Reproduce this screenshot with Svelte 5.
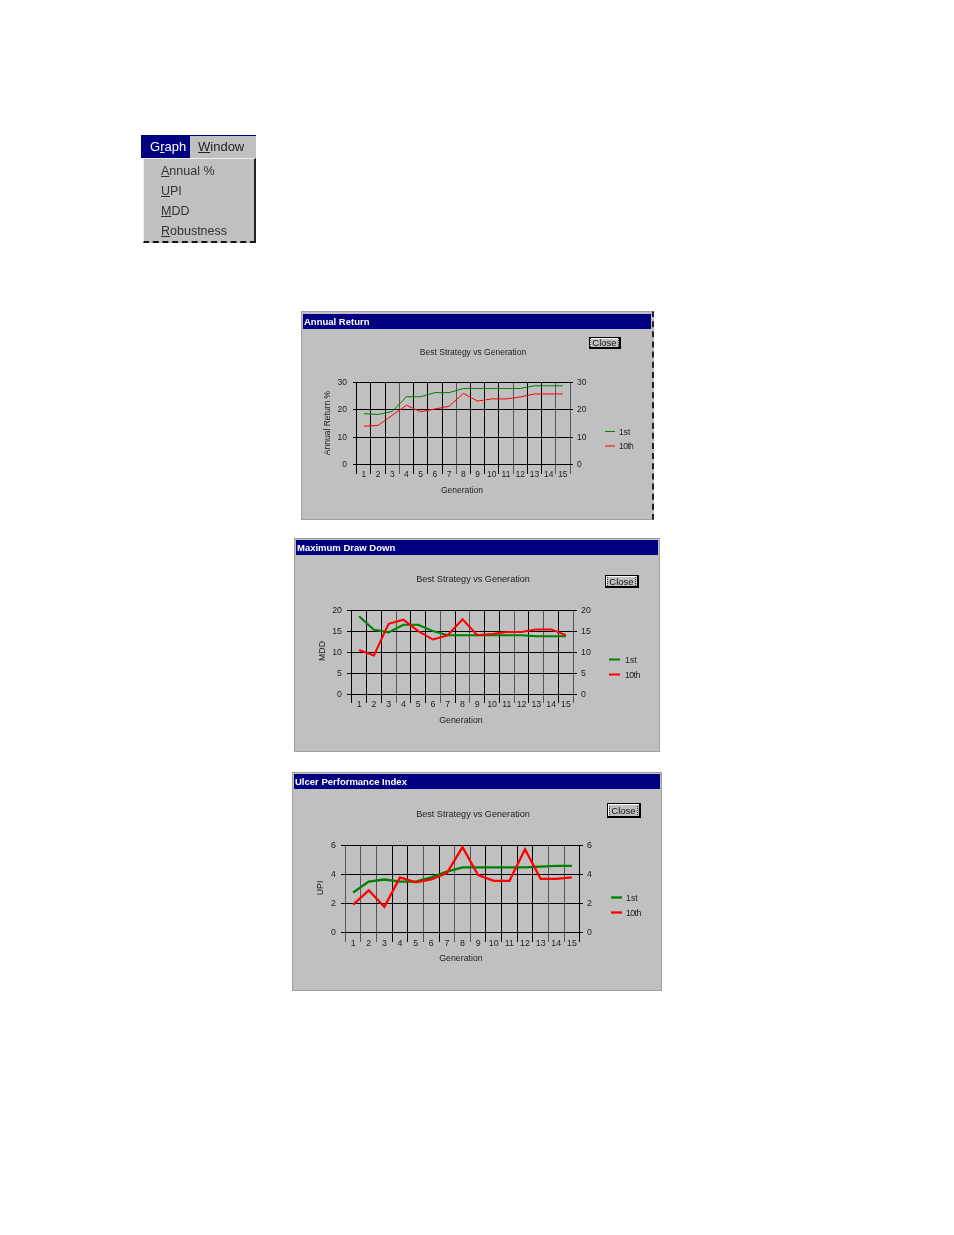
<script lang="ts">
  // all chart geometry is in page pixels, the svg viewBox maps it onto the window
  const charts = [
    {
      id: 'w1', title: 'Annual Return', ylabel: 'Annual Return %', ymax: 30, step: 10,
      box: { x: 303, y: 329, w: 348, h: 190 },
      x0: 356.7, x1: 570, yTop: 382.5, yBot: 464.5, tickEnd: 474, hx0: 353, hx1: 573,
      leftEnd: 347, rightStart: 577, xLabelY: 474,
      gray: [3, 7, 11, 14, 15],
      subY: 352, subX: 473, genX: 462, genY: 490, yLabelX: 327, yLabelY: 423,
      legend: { x0: 605, x1: 615, tx: 619, y1: 431.5, y2: 446 },
      sw: 1,
      first: [18.6, 18.3, 19.4, 24.8, 24.8, 26.3, 26.3, 27.8, 27.8, 27.8, 27.8, 27.8, 28.8, 28.8, 28.8],
      tenth: [14, 14.3, 18, 21.7, 19.3, 20.3, 21.3, 26, 23.2, 24, 24, 24.7, 25.8, 25.8, 25.8]
    },
    {
      id: 'w2', title: 'Maximum Draw Down', ylabel: 'MDD', ymax: 20, step: 5,
      box: { x: 296, y: 555, w: 362, h: 196 },
      x0: 351.7, x1: 573.3, yTop: 610, yBot: 694.3, tickEnd: 703, hx0: 347, hx1: 577,
      leftEnd: 342, rightStart: 581, xLabelY: 704,
      gray: [3, 6, 8, 11, 13, 15],
      subY: 579, subX: 473, genX: 461, genY: 720, yLabelX: 322, yLabelY: 651,
      legend: { x0: 609, x1: 620, tx: 625, y1: 659.5, y2: 674.5 },
      sw: 2,
      first: [18.5, 15.3, 14.7, 16.5, 16.5, 15, 14, 14, 14, 14, 14, 14, 13.8, 13.8, 13.8],
      tenth: [10.5, 9.2, 16.7, 17.7, 15, 13, 14, 17.8, 14, 14.3, 14.8, 14.8, 15.4, 15.4, 14]
    },
    {
      id: 'w3', title: 'Ulcer Performance Index', ylabel: 'UPI', ymax: 6, step: 2,
      box: { x: 294, y: 789, w: 366, h: 201 },
      x0: 345.3, x1: 579.7, yTop: 845.7, yBot: 932, tickEnd: 942, hx0: 341, hx1: 583,
      leftEnd: 336, rightStart: 587, xLabelY: 943,
      gray: [0, 1, 2, 5, 7, 8, 13, 14],
      subY: 814, subX: 473, genX: 461, genY: 958, yLabelX: 320, yLabelY: 888,
      legend: { x0: 611, x1: 622, tx: 626, y1: 897.5, y2: 912.5 },
      sw: 2.3,
      first: [2.75, 3.5, 3.65, 3.5, 3.5, 3.8, 4.2, 4.5, 4.5, 4.5, 4.5, 4.5, 4.55, 4.6, 4.6],
      tenth: [1.9, 2.9, 1.75, 3.8, 3.45, 3.65, 4.1, 5.9, 3.95, 3.55, 3.55, 5.75, 3.7, 3.7, 3.8]
    }
  ]

  const cols = Array.from({ length: 16 }, (_, i) => i)

  function colX(c, i) {
    return Math.floor(c.x0 + ((c.x1 - c.x0) * i) / 15) + 0.5
  }

  function valY(c, v) {
    return c.yBot - ((c.yBot - c.yTop) * v) / c.ymax
  }

  function points(c, vals) {
    const w = (c.x1 - c.x0) / 15
    return vals.map((v, i) => `${c.x0 + w * (i + 0.5)},${valY(c, v)}`).join(' ')
  }

  function ticks(c) {
    const out = []
    for (let v = 0; v <= c.ymax; v += c.step) out.push(v)
    return out
  }
</script>

<div class="page">
  <div class="menu">
    <div class="bar">
      <span class="top active">G<u>r</u>aph</span>
      <span class="top"><u>W</u>indow</span>
    </div>
    <ul class="drop">
      <li><u>A</u>nnual %</li>
      <li><u>U</u>PI</li>
      <li><u>M</u>DD</li>
      <li><u>R</u>obustness</li>
    </ul>
  </div>

  {#each charts as c}
    <section class="window {c.id}">
      <header class="title">{c.title}</header>
      <div class="body">
        <svg
          width={c.box.w}
          height={c.box.h}
          viewBox="{c.box.x} {c.box.y} {c.box.w} {c.box.h}"
        >
          <text class="lbl sub" x={c.subX} y={c.subY + 3} text-anchor="middle">Best Strategy vs Generation</text>

          {#each cols as i}
            <line
              x1={colX(c, i)}
              x2={colX(c, i)}
              y1={c.yTop}
              y2={c.tickEnd}
              stroke={c.gray.includes(i) ? '#555' : '#000'}
              shape-rendering="crispEdges"
            />
          {/each}

          {#each ticks(c) as v}
            {@const y = Math.floor(valY(c, v)) + 0.5}
            <line x1={c.hx0} x2={c.hx1} y1={y} y2={y} stroke="#000" shape-rendering="crispEdges" />
            <text class="lbl" x={c.leftEnd} y={y + 2.5} text-anchor="end">{v}</text>
            <text class="lbl" x={c.rightStart} y={y + 2.5}>{v}</text>
          {/each}

          {#each cols.slice(0, 15) as i}
            <text
              class="lbl"
              x={c.x0 + ((c.x1 - c.x0) * (i + 0.5)) / 15}
              y={c.xLabelY + 3}
              text-anchor="middle">{i + 1}</text>
          {/each}

          <polyline points={points(c, c.first)} fill="none" stroke="#008000" stroke-width={c.sw} />
          <polyline points={points(c, c.tenth)} fill="none" stroke="#ff0000" stroke-width={c.sw} />

          <text class="lbl" x={c.genX} y={c.genY + 3} text-anchor="middle">Generation</text>
          <text
            class="lbl"
            text-anchor="middle"
            transform="translate({c.yLabelX + 3} {c.yLabelY}) rotate(-90)">{c.ylabel}</text>

          <line x1={c.legend.x0} x2={c.legend.x1} y1={c.legend.y1} y2={c.legend.y1} stroke="#008000" stroke-width={c.sw} />
          <text class="lbl" x={c.legend.tx} y={c.legend.y1 + 3}>1st</text>
          <line x1={c.legend.x0} x2={c.legend.x1} y1={c.legend.y2} y2={c.legend.y2} stroke="#ff0000" stroke-width={c.sw} />
          <text class="lbl tight" x={c.legend.tx} y={c.legend.y2 + 3}>10th</text>
        </svg>
        <button class="close" type="button"><span>Close</span></button>
      </div>
    </section>
  {/each}
</div>

<style>
  :global(body) {
    margin: 0;
    background: #fff;
  }

  .page {
    height: 1235px;
    padding-top: 135px;
    box-sizing: border-box;
    font-family: "Liberation Sans", Arial, sans-serif;
    filter: blur(0.2px);
    overflow: hidden;
  }

  .menu {
    width: 115px;
    margin-left: 141px;
    height: 110px;
    border-top: 1px solid #000080;
    box-sizing: border-box;
  }

  .bar {
    height: 22px;
    display: flex;
    background: #c0c0c0;
    font-size: 13px;
    line-height: 22px;
    color: #222;
  }

  .top {
    display: flex;
    align-items: flex-start;
    padding: 0 6px 0 8px;
  }

  .top.active {
    background: #000080;
    color: #fff;
    width: 49px;
    box-sizing: border-box;
    padding-left: 9px;
  }

  .drop {
    list-style: none;
    margin: 0 0 0 2px;
    padding: 2px 0 0 17px;
    height: 85px;
    box-sizing: border-box;
    background: #c0c0c0;
    border-top: 1px solid #eee;
    border-left: 1px solid #eee;
    border-right: 2px solid #222;
    border-bottom: 2px dashed #111;
    font-size: 12.5px;
    color: #333;
  }

  .drop li {
    height: 20px;
    line-height: 20px;
  }

  .window {
    position: relative;
    background: #c0c0c0;
    box-sizing: border-box;
    border: 1px solid #a0a0a0;
  }

  .w1 {
    width: 353px;
    height: 209px;
    margin: 66px 0 0 301px;
    padding: 2px 1px 0 1px;
    border-right: 2px dashed #222;
  }

  .w2 {
    width: 366px;
    height: 214px;
    margin: 18px 0 0 294px;
    padding: 1px 1px 0 1px;
  }

  .w3 {
    width: 370px;
    height: 219px;
    margin: 20px 0 0 292px;
    padding: 1px 1px 0 1px;
  }

  .title {
    height: 15px;
    line-height: 15px;
    padding-left: 1px;
    background: #000080;
    color: #fff;
    font-size: 9.5px;
    font-weight: bold;
    white-space: nowrap;
  }

  .body {
    position: relative;
  }

  svg {
    display: block;
  }

  .lbl {
    font-size: 9px;
    fill: #222;
  }

  .w1 .lbl {
    font-size: 8.5px;
  }

  .w2 .lbl,
  .w3 .lbl {
    font-size: 8.8px;
  }

  .w2 .lbl.sub,
  .w3 .lbl.sub {
    font-size: 9.1px;
  }

  .lbl.tight {
    letter-spacing: -0.6px;
  }

  .close {
    position: absolute;
    padding: 0;
    box-sizing: border-box;
    background: #c0c0c0;
    font: 9.5px "Liberation Sans", Arial, sans-serif;
    color: #111;
    border: 1px solid #000;
    border-right-width: 2px;
    border-bottom-width: 2px;
    box-shadow: inset 1px 1px 0 #fff;
    display: flex;
    align-items: center;
    justify-content: center;
  }

  .close span {
    border-left: 1px dotted #333;
    border-right: 1px dotted #333;
    padding: 0 1px;
    line-height: 9px;
  }

  .w1 .close {
    left: 286px;
    top: 8px;
    width: 32px;
    height: 12px;
  }

  .w2 .close {
    left: 309px;
    top: 20px;
    width: 34px;
    height: 13px;
  }

  .w3 .close {
    left: 313px;
    top: 14px;
    width: 34px;
    height: 15px;
  }
</style>
